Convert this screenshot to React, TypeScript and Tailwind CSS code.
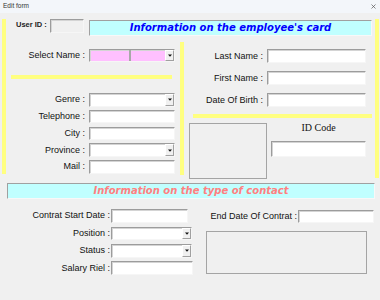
import React from "react";

const sunken =
  "border border-t-[#9c9c9c] border-l-[#9c9c9c] border-r-[#f6f6f6] border-b-[#f6f6f6] shadow-[inset_1px_1px_0_#d4d4d4]";

function Input({ className }: { className: string }) {
  return <div className={`bg-white ${sunken} ${className}`} />;
}

function DropBtn() {
  return (
    <div className="ml-auto w-[9px] h-full bg-[#f0f0f0] border-l border-t border-l-white border-t-white border-r border-b border-r-[#a0a0a0] border-b-[#a0a0a0] flex items-center justify-center shrink-0">
      <svg width="4" height="3" viewBox="0 0 4 3">
        <path d="M0 0.5h4L2 2.8z" fill="#111" />
      </svg>
    </div>
  );
}

function Combo({ className, pink }: { className: string; pink?: boolean }) {
  return (
    <div className={`flex ${pink ? "bg-[#ffc0ff]" : "bg-white"} ${sunken} ${className}`}>
      {pink && <div className="w-[41px] h-full border-r-2 border-r-[#a8a8a8]" />}
      <DropBtn />
    </div>
  );
}

function Label({ className, children }: { className: string; children: React.ReactNode }) {
  return (
    <div className={`text-right text-[9px] leading-none text-[#111] whitespace-nowrap ${className}`}>
      {children}
    </div>
  );
}

function Bar({ className }: { className: string }) {
  return <div className={`bg-[#ffff80] shrink-0 ${className}`} />;
}

export default function App() {
  return (
    <div className="w-[380px] h-[300px] bg-[#f0f0f0] overflow-hidden font-['Liberation_Sans',Arial,sans-serif] text-black">
      {/* title bar */}
      <div className="h-[13px] bg-[#f3f6fa] flex items-center justify-between pl-[3px] pr-[3px]">
        <span className="text-[6.5px] leading-none text-[#333]">Edit form</span>
        <svg width="5" height="5" viewBox="0 0 5 5" className="mr-[1px]">
          <path d="M0.5 0.5L4.5 4.5M4.5 0.5L0.5 4.5" stroke="#555" strokeWidth="0.7" />
        </svg>
      </div>

      {/* top section */}
      <div className="flex mt-[6px]">
        <Bar className="ml-[2px] w-[4px] h-[155px]" />
        <div className="w-[369px] flex flex-col">
          {/* row 1 */}
          <div className="flex items-start h-[17px]">
            <div className="ml-[10px] w-[34px] h-[12px] flex items-center text-[7.5px] font-bold leading-none text-[#222]">
              User ID :
            </div>
            <div className={`w-[34px] h-[14px] bg-[#f0f0f0] ${sunken}`} />
            <div className="ml-[5px] mt-[1px] w-[283px] h-[16px] bg-[#c0ffff] border border-t-[#a0a0a0] border-l-[#a0a0a0] border-r-[#f8f8f8] border-b-[#f8f8f8] flex items-center justify-center">
              <span className="font-['DejaVu_Sans',Verdana,sans-serif] font-bold italic text-[10px] leading-none text-[#0000ff] whitespace-nowrap">
                Information on the employee's card
              </span>
            </div>
          </div>

          {/* row 2 */}
          <div className="flex">
            {/* left column */}
            <div className="w-[174px] flex flex-col">
              <div className="mt-[13px] flex items-center h-[13px]">
                <Label className="w-[79px] text-[9.5px]">Select Name :</Label>
                <Combo className="ml-[4px] w-[86px] h-[13px]" pink />
              </div>
              <Bar className="mt-[13px] ml-[5px] w-[161px] h-[4px]" />
              <div className="mt-[14px] flex flex-col gap-[3.25px]">
                <div className="flex items-center h-[13.5px]">
                  <Label className="w-[79px]">Genre :</Label>
                  <Combo className="ml-[4px] w-[86px] h-[13.5px]" />
                </div>
                <div className="flex items-center h-[13.5px]">
                  <Label className="w-[79px]">Telephone :</Label>
                  <Input className="ml-[4px] w-[86px] h-[13.5px]" />
                </div>
                <div className="flex items-center h-[13.5px]">
                  <Label className="w-[79px]">City :</Label>
                  <Input className="ml-[4px] w-[86px] h-[13.5px]" />
                </div>
                <div className="flex items-center h-[13.5px]">
                  <Label className="w-[79px]">Province :</Label>
                  <Combo className="ml-[4px] w-[86px] h-[13.5px]" />
                </div>
                <div className="flex items-center h-[13.5px]">
                  <Label className="w-[79px]">Mail :</Label>
                  <Input className="ml-[4px] w-[86px] h-[13.5px]" />
                </div>
              </div>
            </div>

            {/* middle bar */}
            <Bar className="mt-[6px] w-[4px] h-[133px]" />

            {/* right column */}
            <div className="w-[191px] flex flex-col">
              <div className="mt-[13px] flex flex-col gap-[8px]">
                <div className="flex items-center h-[14px]">
                  <Label className="w-[79px]">Last Name :</Label>
                  <Input className="ml-[4px] w-[99px] h-[14px]" />
                </div>
                <div className="flex items-center h-[14px]">
                  <Label className="w-[79px]">First Name :</Label>
                  <Input className="ml-[4px] w-[99px] h-[14px]" />
                </div>
                <div className="flex items-center h-[14px]">
                  <Label className="w-[79px]">Date Of Birth :</Label>
                  <Input className="ml-[4px] w-[99px] h-[14px]" />
                </div>
              </div>
              <Bar className="mt-[7px] ml-[9px] w-[179px] h-[4px]" />
              <div className="mt-[5px] flex">
                <div className="ml-[5px] w-[78px] h-[56px] border border-[#a4a4a4]" />
                <div className="ml-[4px] w-[95px] flex flex-col">
                  <div className="h-[10px] flex items-center justify-center font-['Liberation_Serif','Times_New_Roman',serif] text-[10px] leading-none text-[#111]">
                    ID Code
                  </div>
                  <Input className="mt-[8px] w-[95px] h-[16px]" />
                </div>
              </div>
            </div>
          </div>
        </div>
        <Bar className="w-[4px] h-[159px]" />
      </div>

      {/* second header */}
      <div className="mt-[4px] ml-[7px] w-[368px] h-[16px] bg-[#c0ffff] border border-t-[#a0a0a0] border-l-[#a0a0a0] border-r-[#f8f8f8] border-b-[#f8f8f8] flex items-center justify-center">
        <span className="font-['DejaVu_Sans',Verdana,sans-serif] font-bold italic text-[10px] leading-none text-[#ff8080] whitespace-nowrap">
          Information on the type of contact
        </span>
      </div>

      {/* bottom section */}
      <div className="flex">
        <div className="w-[206px] mt-[10px] flex flex-col gap-[4px]">
          <div className="flex items-center h-[13.5px]">
            <Label className="w-[110px]">Contrat Start Date :</Label>
            <Input className="ml-[1px] w-[77px] h-[13.5px]" />
          </div>
          <div className="flex items-center h-[13.5px]">
            <Label className="w-[110px]">Position :</Label>
            <Combo className="ml-[1px] w-[81px] h-[13.5px]" />
          </div>
          <div className="flex items-center h-[13.5px]">
            <Label className="w-[110px]">Status :</Label>
            <Combo className="ml-[1px] w-[81px] h-[13.5px]" />
          </div>
          <div className="flex items-center h-[13.5px]">
            <Label className="w-[110px]">Salary Riel :</Label>
            <Input className="ml-[1px] w-[82px] h-[14px]" />
          </div>
        </div>
        <div className="flex flex-col mt-[11px]">
          <div className="flex items-center h-[13px]">
            <Label className="w-[91px]">End Date Of Contrat :</Label>
            <Input className="ml-[1px] w-[76px] h-[13px]" />
          </div>
          <div className="mt-[8px] w-[161px] h-[43px] border border-[#a4a4a4]" />
        </div>
      </div>
    </div>
  );
}
